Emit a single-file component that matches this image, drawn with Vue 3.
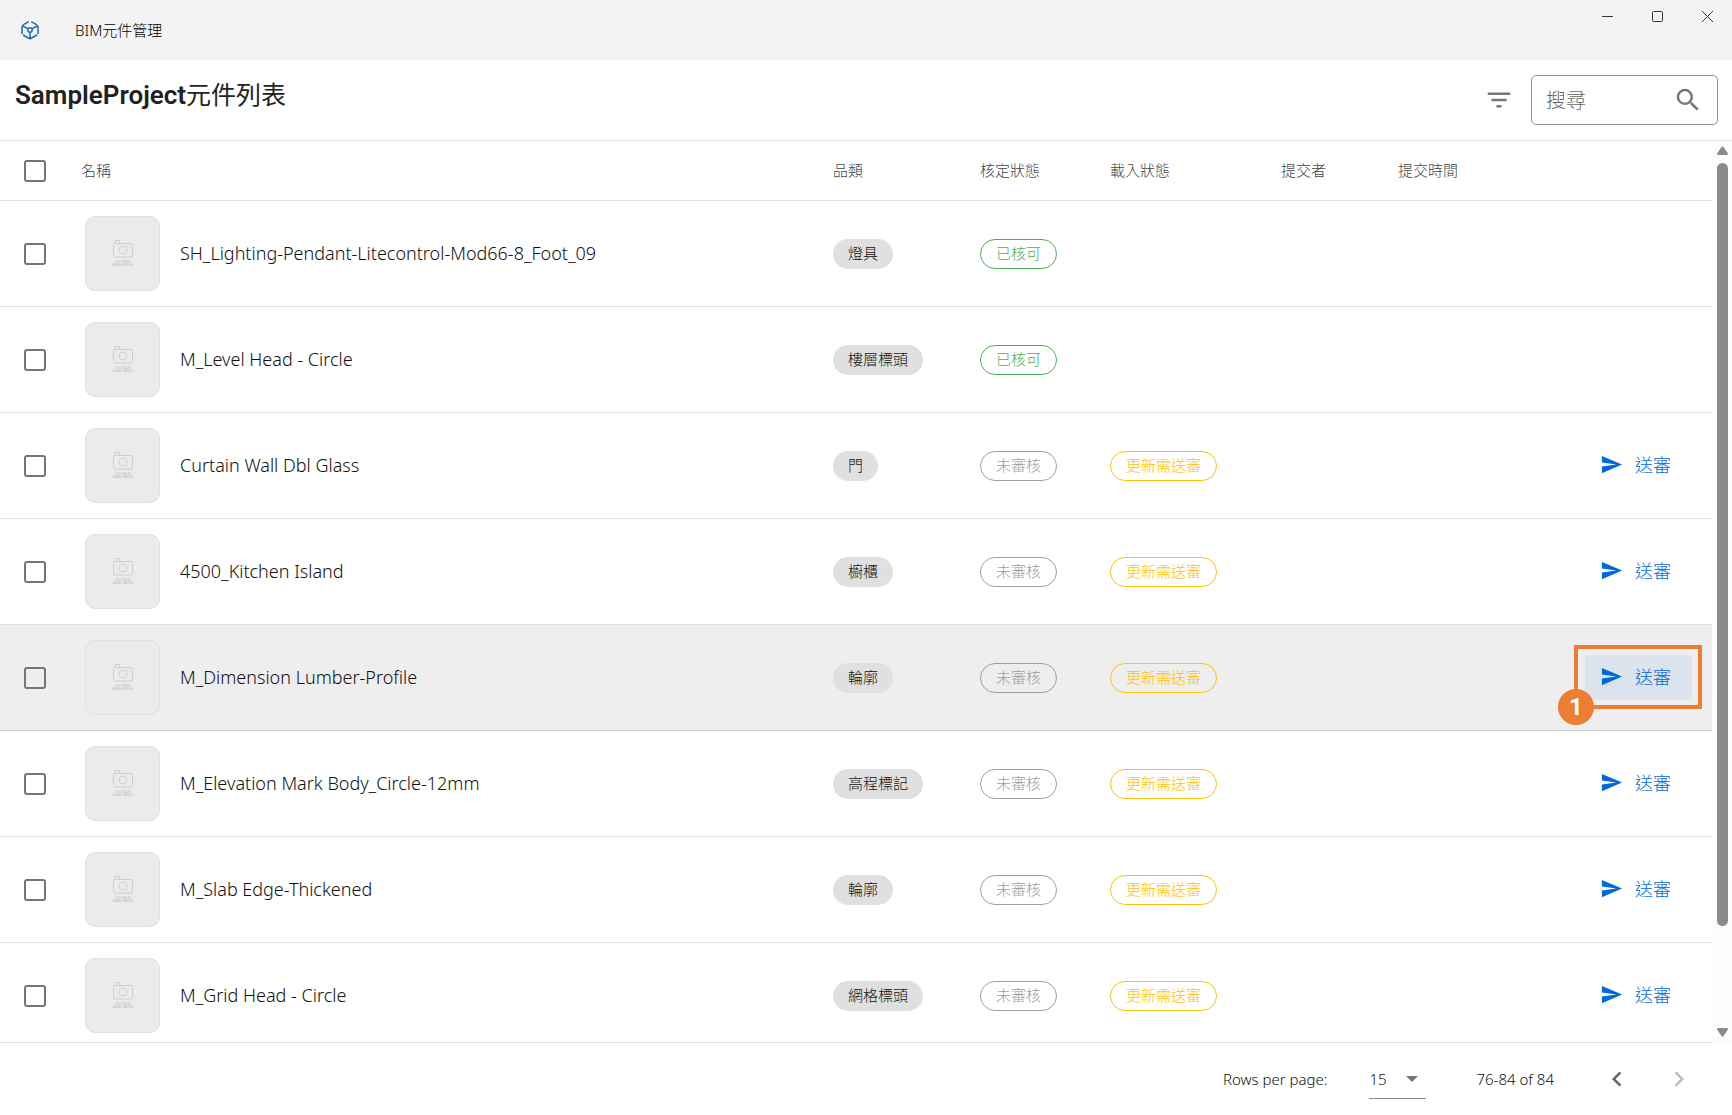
<script setup>
import { ref } from 'vue'

const items = ref([
  { name: 'SH_Lighting-Pendant-Litecontrol-Mod66-8_Foot_09', category: '燈具', approved: true },
  { name: 'M_Level Head - Circle', category: '樓層標頭', approved: true },
  { name: 'Curtain Wall Dbl Glass', category: '門', approved: false },
  { name: '4500_Kitchen Island', category: '櫥櫃', approved: false },
  { name: 'M_Dimension Lumber-Profile', category: '輪廓', approved: false, active: true },
  { name: 'M_Elevation Mark Body_Circle-12mm', category: '高程標記', approved: false },
  { name: 'M_Slab Edge-Thickened', category: '輪廓', approved: false },
  { name: 'M_Grid Head - Circle', category: '網格標頭', approved: false }
])
const search = ref('')
const pageSize = ref(15)
</script>

<template>
  <div class="window">
    <header class="titlebar">
      <svg class="logo" viewBox="0 0 20 20" aria-hidden="true">
        <path d="M8.800 1.600 3 4.900M11.200 1.600 17 4.900M2 6v8M18 6v8M3 15l7 4 7-4M2 5.500l6 3.300M18 5.500l-6 3.300M10 12v6.500" />
        <circle cx="10" cy="10" r="2.200" />
      </svg>
      <span class="app-name">BIM元件管理</span>
      <div class="controls">
        <button type="button" aria-label="Minimize"><svg viewBox="0 0 11 11"><path d="M0 5.500h11" /></svg></button>
        <button type="button" aria-label="Maximize"><svg viewBox="0 0 11 11"><rect x=".5" y=".5" width="10" height="10" rx="1" /></svg></button>
        <button type="button" aria-label="Close"><svg viewBox="0 0 11 11"><path d="M0 0l11 11M11 0 0 11" /></svg></button>
      </div>
    </header>

    <section class="toolbar">
      <h1><b>SampleProject</b>元件列表</h1>
      <button type="button" class="icon-button" aria-label="Filter">
        <svg viewBox="0 0 24 24"><path d="M10 18h4v-2h-4v2zM3 6v2h18V6H3zm3 7h12v-2H6v2z" /></svg>
      </button>
      <label class="search">
        <input v-model="search" type="text" placeholder="搜尋" aria-label="搜尋">
        <svg viewBox="0 0 24 24"><path d="M15.500 14h-.79l-.28-.27A6.471 6.471 0 0 0 16 9.500 6.500 6.500 0 1 0 9.500 16c1.610 0 3.090-.59 4.230-1.570l.27.28v.79l5 4.990L20.490 19l-4.990-5zm-6 0C7.010 14 5 11.990 5 9.500S7.010 5 9.500 5 14 7.010 14 9.500 11.990 14 9.500 14z" /></svg>
      </label>
    </section>

    <main class="content">
      <div class="viewport">
        <table>
          <colgroup>
            <col class="c-check"><col><col class="c-category"><col class="c-status"><col class="c-load"><col class="c-author"><col class="c-time"><col class="c-action">
          </colgroup>
          <thead>
            <tr>
              <th class="check"><input type="checkbox" aria-label="Select all"></th>
              <th>名稱</th>
              <th>品類</th>
              <th>核定狀態</th>
              <th>載入狀態</th>
              <th>提交者</th>
              <th>提交時間</th>
              <th></th>
            </tr>
          </thead>
          <tbody>
            <tr v-for="item in items" :key="item.name" :class="{ active: item.active }">
              <td class="check"><input type="checkbox" :aria-label="item.name"></td>
              <td>
                <div class="name">
                  <svg class="thumb" viewBox="0 0 73 73" aria-hidden="true">
                    <g class="camera">
                      <rect x="27.500" y="26.500" width="19" height="13.500" rx="1.500" />
                      <path d="M29 26.500v-3h4.500v3" />
                      <circle cx="37" cy="33" r="4" />
                    </g>
                    <text x="37" y="45.500" font-size="3">NO IMAGE</text>
                    <text x="37" y="49" font-size="4">AVAILABLE</text>
                  </svg>
                  <span>{{ item.name }}</span>
                </div>
              </td>
              <td><span class="chip">{{ item.category }}</span></td>
              <td><span class="chip outline" :class="item.approved ? 'green' : 'grey'">{{ item.approved ? '已核可' : '未審核' }}</span></td>
              <td><span v-if="!item.approved" class="chip outline amber">更新需送審</span></td>
              <td></td>
              <td></td>
              <td class="action">
                <div v-if="!item.approved" class="send-wrap">
                  <button type="button" class="send">
                    <svg viewBox="0 0 24 24"><path d="M2 21l21-9L2 3v7l15 2-15 2z" /></svg>
                    送審
                  </button>
                  <template v-if="item.active">
                    <div class="frame"></div>
                    <span class="badge">1</span>
                  </template>
                </div>
              </td>
            </tr>
          </tbody>
        </table>
      </div>
      <div class="scrollbar" aria-hidden="true">
        <svg viewBox="0 0 11 9"><path d="M4.700.8Q5.500 0 6.300.8L11 7.500Q11 9 10 9H1Q0 9 0 7.500z" /></svg>
        <div class="track"><div class="thumb-bar"></div></div>
        <svg viewBox="0 0 11 9"><path d="M4.700 8.200Q5.500 9 6.300 8.200L11 1.500Q11 0 10 0H1Q0 0 0 1.500z" /></svg>
      </div>
    </main>

    <footer class="pager">
      <label for="page-size">Rows per page:</label>
      <div class="select">
        <select id="page-size" v-model="pageSize">
          <option :value="15">15</option>
          <option :value="30">30</option>
        </select>
        <svg viewBox="0 0 12 6"><path d="M0 0h12L6 6z" /></svg>
      </div>
      <span class="range">76-84 of 84</span>
      <button type="button" aria-label="Previous page"><svg viewBox="0 0 24 24"><path d="M15.410 7.410 14 6l-6 6 6 6 1.410-1.410L10.830 12z" /></svg></button>
      <button type="button" aria-label="Next page" disabled><svg viewBox="0 0 24 24"><path d="M10 6 8.590 7.410 13.170 12l-4.580 4.590L10 18l6-6z" /></svg></button>
    </footer>
  </div>
</template>

<style>
body {
  margin: 0;
  background: #fff;
}
</style>

<style scoped>
.window {
  display: flex;
  flex-direction: column;
  height: 100vh;
  color: #111;
  font: 300 15px/20px "Noto Sans", "Noto Sans CJK TC", sans-serif;
}
.window * {
  box-sizing: border-box;
}
button,
input,
select {
  font: inherit;
  color: inherit;
  margin: 0;
  padding: 0;
  border: 0;
  background: none;
}
svg {
  display: block;
  flex: none;
}
.titlebar {
  display: flex;
  align-items: center;
  flex: none;
  height: 60px;
  padding-left: 20px;
  background: #f3f3f3;
  color: #000;
}
.logo {
  width: 20px;
  height: 20px;
  fill: none;
  stroke: #2369b3;
  stroke-width: 1.5;
}
.app-name {
  margin-left: 35px;
}
.controls {
  display: flex;
  align-self: flex-start;
  margin-left: auto;
}
.controls button {
  display: grid;
  place-items: center;
  width: 50px;
  height: 33px;
}
.controls svg {
  width: 11px;
  height: 11px;
  fill: none;
  stroke: #333;
}
.toolbar {
  display: flex;
  align-items: center;
  flex: none;
  height: 81px;
  padding: 0 14px 0 15px;
  border-bottom: 1px solid #e0e0e0;
}
h1 {
  margin: 0 auto 10px 0;
  color: #222;
  font-size: 25px;
  line-height: 32px;
  font-weight: 400;
  font-family: Roboto, "Noto Sans CJK TC", sans-serif;
}
h1 b {
  font-size: 26px;
  font-weight: 600;
}
.icon-button svg,
.search svg {
  width: 30px;
  height: 30px;
  fill: #757575;
}
.search {
  display: flex;
  align-items: center;
  width: 187px;
  height: 50px;
  margin-left: 17px;
  padding: 0 14px;
  border: 1px solid #949494;
  border-radius: 5px;
}
.search input {
  flex: 1;
  min-width: 0;
  font-size: 20px;
  outline: none;
}
.search input::placeholder {
  color: #666;
  opacity: 1;
}
.content {
  display: flex;
  flex: 1;
  min-height: 0;
}
.viewport {
  flex: 1;
  min-width: 0;
  overflow: hidden;
  border-bottom: 1px solid #e0e0e0;
}
table {
  width: 100%;
  table-layout: fixed;
  border-collapse: separate;
  border-spacing: 0;
}
.c-check { width: 65px; }
.c-category { width: 147px; }
.c-status { width: 130px; }
.c-load { width: 171px; }
.c-author { width: 117px; }
.c-time { width: 187px; }
.c-action { width: 143px; }
th,
td {
  padding: 0 0 0 16px;
  border-bottom: 1px solid #e0e0e0;
  text-align: left;
  vertical-align: middle;
}
th {
  height: 60px;
  padding-bottom: 2px;
  color: #444;
  font-weight: 300;
}
td {
  height: 106px;
}
.active td {
  background: #eee;
  border-bottom-color: #ccc;
}
.check {
  padding-left: 24px;
  padding-bottom: 0;
}
.check input {
  display: block;
  appearance: none;
  width: 22px;
  height: 22px;
  border: 2px solid #757575;
  border-radius: 3px;
}
.name {
  display: flex;
  align-items: center;
  gap: 20px;
  padding-left: 4px;
  font-size: 18px;
  line-height: 24px;
  white-space: nowrap;
}
.name span {
  padding-bottom: 2px;
}
.thumb {
  width: 75px;
  height: 75px;
  border: 1px solid #e0e0e0;
  border-radius: 10px;
  background: #ebebeb;
}
.camera {
  fill: none;
  stroke: #cfcfcf;
}
.thumb text {
  fill: #c0c0c0;
  font-family: "Liberation Sans", sans-serif;
  font-weight: 400;
  text-anchor: middle;
}
.chip {
  display: inline-flex;
  align-items: center;
  height: 30px;
  padding: 0 15px 2px;
  border-radius: 15px;
  background: #e0e0e0;
  white-space: nowrap;
  vertical-align: middle;
}
.outline {
  background: none;
  border: 1px solid currentColor;
}
.green { color: #4caf50; }
.grey { color: #9e9e9e; }
.amber { color: #ffc107; }
.send-wrap {
  position: relative;
  width: 107px;
}
.send {
  display: flex;
  align-items: center;
  gap: 12px;
  width: 100%;
  height: 45px;
  padding: 0 0 2px 15px;
  border-radius: 5px;
  color: #0069d9;
  font-size: 18px;
}
.send svg {
  width: 23px;
  height: 23px;
  fill: currentColor;
}
.active .send {
  background: #dbe3ed;
}
.frame {
  position: absolute;
  inset: -10px -10px -9px -11px;
  border: 4px solid #ed7d31;
  pointer-events: none;
}
.badge {
  position: absolute;
  left: -27px;
  top: 34px;
  width: 36px;
  height: 36px;
  border-radius: 50%;
  background: #ed7d31;
  color: #fff;
  font: 700 24px/36px Roboto, sans-serif;
  text-align: center;
}
.scrollbar {
  display: flex;
  flex-direction: column;
  align-items: center;
  gap: 8px;
  width: 20px;
  padding: 5px 0 6px;
  background: #fcfcfc;
}
.scrollbar svg {
  width: 11px;
  height: 9px;
  fill: #8b8b8b;
}
.track {
  flex: 1;
}
.thumb-bar {
  width: 11px;
  height: 89%;
  border-radius: 6px;
  background: #8b8b8b;
}
.pager {
  display: flex;
  align-items: center;
  justify-content: flex-end;
  flex: none;
  height: 72px;
  padding-right: 33px;
}
.select {
  display: grid;
  align-items: center;
  width: 57px;
  height: 40px;
  margin-left: 42px;
  border-bottom: 1px solid #8a8a8a;
}
.select select,
.select svg {
  grid-area: 1 / 1;
}
.select select {
  appearance: none;
  width: 100%;
}
.select svg {
  justify-self: end;
  width: 12px;
  height: 6px;
  margin-right: 8px;
  fill: #757575;
  pointer-events: none;
}
.range {
  margin: 0 43px 0 50px;
}
.pager button {
  display: grid;
  place-items: center;
  width: 40px;
  height: 40px;
}
.pager button + button {
  margin-left: 22px;
}
.pager button svg {
  width: 30px;
  height: 30px;
  fill: #666;
}
.pager button:disabled svg {
  fill: #bbb;
}
</style>
